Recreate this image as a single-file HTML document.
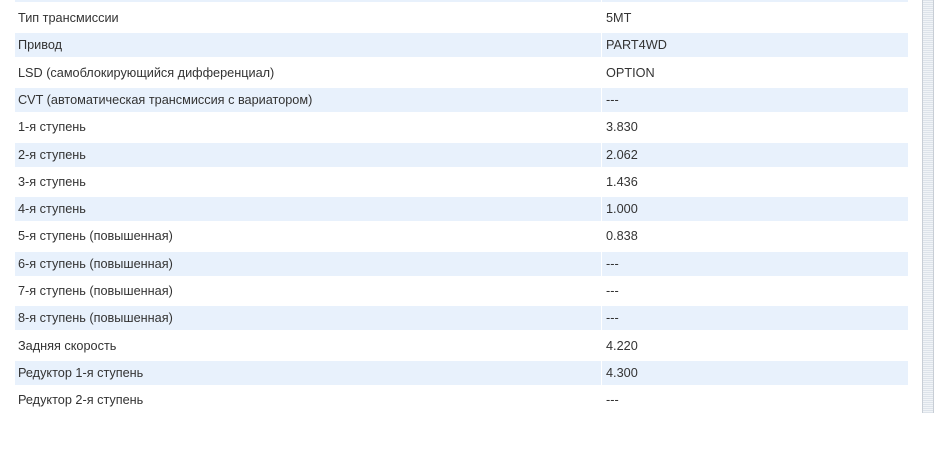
<!DOCTYPE html>
<html><head><meta charset="utf-8"><style>
body{margin:0;width:936px;height:460px;background:#fff;position:relative;overflow:hidden;font-family:"Liberation Sans","DejaVu Sans",sans-serif;font-size:12.7px;color:#333}
.r{position:absolute;left:15px;width:893px;height:24px}
.c{position:absolute;top:0;height:24px;line-height:24px;white-space:nowrap}
.a{left:0;width:583px;padding-left:3px}
.b{left:587px;width:302px;padding-left:4px}
.s .c{background:#e8f1fc}
.sb{position:absolute;left:922px;top:0;width:12px;height:413px;background:repeating-linear-gradient(#dde3ea 0 1px,#f1f4f7 1px 2px);border-left:1px solid #c8ced6;border-right:1px solid #c8ced6;box-sizing:border-box}
</style></head><body>
<div class="r s" style="top:-22px"><div class="c a"></div><div class="c b"></div></div>
<div class="r" style="top:6px"><div class="c a">Тип трансмиссии</div><div class="c b">5MT</div></div>
<div class="r s" style="top:33px"><div class="c a">Привод</div><div class="c b">PART4WD</div></div>
<div class="r" style="top:61px"><div class="c a">LSD (самоблокирующийся дифференциал)</div><div class="c b">OPTION</div></div>
<div class="r s" style="top:88px"><div class="c a">CVT (автоматическая трансмиссия с вариатором)</div><div class="c b">---</div></div>
<div class="r" style="top:115px"><div class="c a">1-я ступень</div><div class="c b">3.830</div></div>
<div class="r s" style="top:143px"><div class="c a">2-я ступень</div><div class="c b">2.062</div></div>
<div class="r" style="top:170px"><div class="c a">3-я ступень</div><div class="c b">1.436</div></div>
<div class="r s" style="top:197px"><div class="c a">4-я ступень</div><div class="c b">1.000</div></div>
<div class="r" style="top:224px"><div class="c a">5-я ступень (повышенная)</div><div class="c b">0.838</div></div>
<div class="r s" style="top:252px"><div class="c a">6-я ступень (повышенная)</div><div class="c b">---</div></div>
<div class="r" style="top:279px"><div class="c a">7-я ступень (повышенная)</div><div class="c b">---</div></div>
<div class="r s" style="top:306px"><div class="c a">8-я ступень (повышенная)</div><div class="c b">---</div></div>
<div class="r" style="top:334px"><div class="c a">Задняя скорость</div><div class="c b">4.220</div></div>
<div class="r s" style="top:361px"><div class="c a">Редуктор 1-я ступень</div><div class="c b">4.300</div></div>
<div class="r" style="top:388px"><div class="c a">Редуктор 2-я ступень</div><div class="c b">---</div></div>
<div class="sb"></div>
</body></html>
